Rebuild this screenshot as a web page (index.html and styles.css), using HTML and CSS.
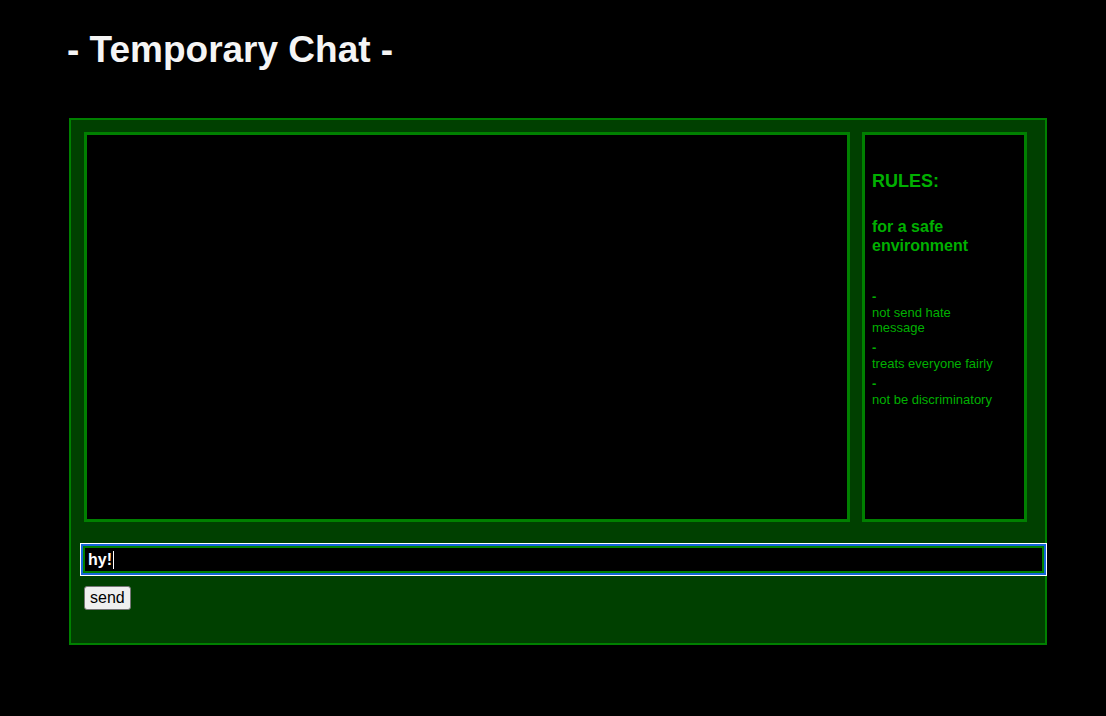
FILE: index.html
```html
<!DOCTYPE html>
<html>
<head>
<meta charset="utf-8">
<title>Temporary Chat</title>
<link rel="stylesheet" href="styles.css">
</head>
<body>
<h1 class="title">- Temporary Chat -</h1>
<div class="chat">
  <div class="row">
    <div class="messages"></div>
    <div class="rules">
      <div class="rules-title">RULES:</div>
      <div class="rules-sub">for a safe environment</div>
      <div class="rules-list">
        <div class="item"><div class="dash">-</div><div class="text">not send hate message</div></div>
        <div class="item"><div class="dash">-</div><div class="text">treats everyone fairly</div></div>
        <div class="item"><div class="dash">-</div><div class="text">not be discriminatory</div></div>
      </div>
    </div>
  </div>
  <div class="input"><span class="typed">hy!</span><span class="caret"></span></div>
  <button class="send">send</button>
</div>
</body>
</html>
```
FILE: styles.css
```css
html, body {
  margin: 0;
  padding: 0;
  background: #000;
}
body {
  font-family: "Liberation Sans", Arial, sans-serif;
  padding-top: 28px;
}
.title {
  margin: 0 0 46px 67px;
  font-size: 37px;
  line-height: 44px;
  font-weight: 700;
  color: #f5f5f5;
}
.chat {
  margin-left: 69px;
  background: #004000;
  border: 2px solid #008000;
  padding: 12px 1px 0 12px;
  box-sizing: border-box;
  width: 978px;
  height: 527px;
  display: flex;
  flex-direction: column;
  align-items: flex-start;
}
.row {
  display: flex;
  gap: 12px;
  height: 390px;
  margin: 0 17px 0 1px;
  align-self: stretch;
}
.messages {
  flex: 1;
  background: #000;
  border: 3px solid #008000;
}
.rules {
  width: 165px;
  box-sizing: border-box;
  background: #000;
  border: 3px solid #008000;
  padding: 34px 8px 0 7px;
  color: #00b000;
}
.rules-title {
  font-size: 18px;
  font-weight: 700;
  line-height: 24px;
}
.rules-sub {
  margin-top: 24px;
  font-size: 16px;
  font-weight: 700;
  line-height: 19px;
}
.rules-list {
  margin-top: 34px;
  width: 128px;
  font-size: 13px;
}
.item {
  margin-bottom: 5px;
}
.dash {
  line-height: 16px;
  font-weight: 700;
}
.text {
  line-height: 15px;
  font-weight: 500;
}
.input {
  margin-top: 24px;
  align-self: stretch;
  height: 27px;
  box-sizing: border-box;
  background: #000;
  border: 2px solid #008000;
  outline: 2px solid #1565d8;
  box-shadow: 0 0 0 3px #fff;
  padding: 0 3px;
  display: flex;
  align-items: center;
  color: #fff;
  font-size: 16px;
  font-weight: 700;
}
.caret {
  display: inline-block;
  width: 1px;
  height: 18px;
  background: #fff;
  margin-left: 1px;
}
.send {
  margin: 13px 0 0 1px;
  height: 24px;
  padding: 1px 5px;
  font-family: "Liberation Sans", Arial, sans-serif;
  font-size: 16px;
  color: #000;
  background: #efefef;
  border: 1px solid #767676;
  border-radius: 3px;
}
```
